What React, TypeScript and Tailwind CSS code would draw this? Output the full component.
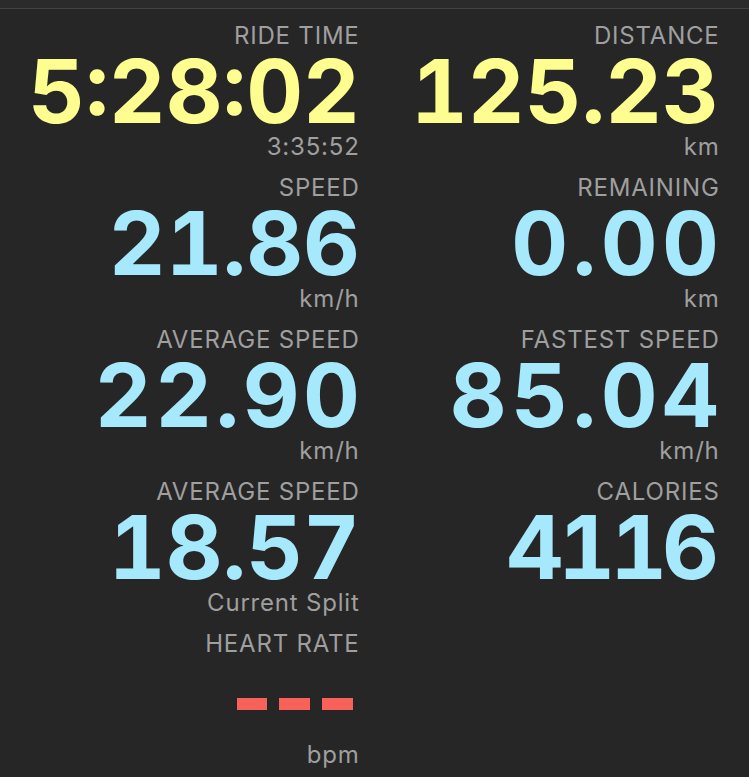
import React from "react";

type Item = {
  label: string;
  value: string;
  unit: string;
  color: "yellow" | "cyan";
  track: string;
};

const left: Item[] = [
  { label: "RIDE TIME", value: "5:28:02", unit: "3:35:52", color: "yellow", track: "tracking-[0px] mr-[-2px]" },
  { label: "SPEED", value: "21.86", unit: "km/h", color: "cyan", track: "tracking-[0px] mr-[-2px]" },
  { label: "AVERAGE SPEED", value: "22.90", unit: "km/h", color: "cyan", track: "tracking-[3.5px] mr-[-5.5px]" },
  { label: "AVERAGE SPEED", value: "18.57", unit: "Current Split", color: "cyan", track: "tracking-[0px] mr-[-2px]" },
];

const right: Item[] = [
  { label: "DISTANCE", value: "125.23", unit: "km", color: "yellow", track: "tracking-[0px] mr-[-1px]" },
  { label: "REMAINING", value: "0.00", unit: "km", color: "cyan", track: "tracking-[4.5px] mr-[-5.5px]" },
  { label: "FASTEST SPEED", value: "85.04", unit: "km/h", color: "cyan", track: "tracking-[4.5px] mr-[-5.5px]" },
  { label: "CALORIES", value: "4116", unit: "", color: "cyan", track: "tracking-[-5px] mr-[4px]" },
];

const small =
  "h-[26px] leading-[26px] text-[24px] tracking-[0.8px] mr-[-1.6px] text-[#9f9f9f] whitespace-nowrap";

function Block({ item }: { item: Item }) {
  return (
    <div className="flex flex-col items-end mb-[14px]">
      <div className={small + " pt-[1px]"}>{item.label}</div>
      <div
        className={
          "h-[86px] leading-[86px] text-[88px] font-bold tabular-nums whitespace-nowrap " +
          item.track +
          " " +
          (item.color === "yellow" ? "text-[#fefd8f]" : "text-[#a6e9fd]")
        }
      >
        {item.value}
      </div>
      <div className={small}>{item.unit}</div>
    </div>
  );
}

export default function App() {
  return (
    <div
      className="w-[749px] h-[777px] bg-[#262626] overflow-hidden"
      style={{ fontFamily: "Inter, 'Noto Sans', sans-serif" }}
    >
      <div className="h-[8px] bg-[#2b2b2b]" />
      <div className="h-[1px] bg-[#434343]" />
      <div className="w-[720px] grid grid-cols-2 pt-[13px]">
        <div className="pr-[2px] flex flex-col">
          {left.map((it, i) => (
            <Block key={i} item={it} />
          ))}
          <div className="flex flex-col items-end">
            <div className={small + " pt-[1px]"}>HEART RATE</div>
            <div className="h-[86px] flex justify-end items-start pt-[42px] pr-[5px] gap-[12px]">
              <span className="block w-[30px] h-[12px] bg-[#f7615a]" />
              <span className="block w-[31px] h-[12px] bg-[#f7615a]" />
              <span className="block w-[31px] h-[12px] bg-[#f7615a]" />
            </div>
            <div className={small}>bpm</div>
          </div>
        </div>
        <div className="pr-[2px] flex flex-col">
          {right.map((it, i) => (
            <Block key={i} item={it} />
          ))}
        </div>
      </div>
    </div>
  );
}
